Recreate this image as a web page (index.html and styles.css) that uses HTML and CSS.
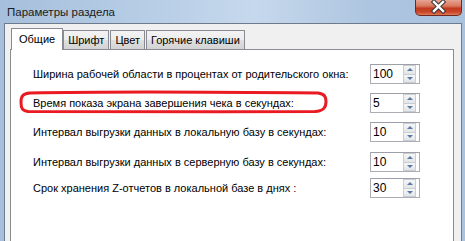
FILE: index.html
```html
<!DOCTYPE html>
<html>
<head>
<meta charset="utf-8">
<link rel="stylesheet" href="styles.css">
</head>
<body>
<div class="window">
  <div class="titlebar">
    <span class="title">Параметры раздела</span>
    <div class="close">
      <svg width="47" height="16" viewBox="0 0 47 16">
        <path d="M19 3 L28 12 M28 3 L19 12" stroke="#3a3a3a" stroke-width="4.5" stroke-linecap="square"/>
        <path d="M19 3 L28 12 M28 3 L19 12" stroke="#ffffff" stroke-width="2.4" stroke-linecap="square"/>
      </svg>
    </div>
  </div>
  <div class="client">
    <div class="tabs">
      <div class="tab active">Общие</div>
      <div class="tab">Шрифт</div>
      <div class="tab">Цвет</div>
      <div class="tab">Горячие клавиши</div>
    </div>
    <div class="panel">
      <div class="row">
        <span class="label">Ширина рабочей области в процентах от родительского окна:</span>
        <div class="spin"><span class="value">100</span><div class="buttons"><span class="btn up"></span><span class="btn down"></span></div></div>
      </div>
      <div class="row">
        <span class="label">Время показа экрана завершения чека в секундах:</span>
        <div class="spin"><span class="value">5</span><div class="buttons"><span class="btn up"></span><span class="btn down"></span></div></div>
      </div>
      <div class="row">
        <span class="label">Интервал выгрузки данных в локальную базу в секундах:</span>
        <div class="spin"><span class="value">10</span><div class="buttons"><span class="btn up"></span><span class="btn down"></span></div></div>
      </div>
      <div class="row">
        <span class="label">Интервал выгрузки данных в серверную базу в секундах:</span>
        <div class="spin"><span class="value">10</span><div class="buttons"><span class="btn up"></span><span class="btn down"></span></div></div>
      </div>
      <div class="row">
        <span class="label">Срок хранения Z-отчетов в локальной базе в днях :</span>
        <div class="spin"><span class="value">30</span><div class="buttons"><span class="btn up"></span><span class="btn down"></span></div></div>
      </div>
      <svg class="mark" width="312" height="25" viewBox="0 0 312 25">
        <path d="M12 3 C60 2 200 2 300 3 C307 4 308 7 308 12 C308 18 305 21 297 21.5 C200 22 80 22 10 21.5 C4 21 3 18 3 12 C3 6 5 3.5 12 3 Z" fill="none" stroke="#ea1a22" stroke-width="3"/>
      </svg>
    </div>
  </div>
</div>
</body>
</html>
```

FILE: styles.css
```css
html, body {
  margin: 0;
  padding: 0;
}
body {
  width: 465px;
  height: 241px;
  overflow: hidden;
  background: #97b2d0;
  font-family: "Liberation Sans", Arial, sans-serif;
  font-size: 11px;
  color: #000;
}
.window {
  display: flex;
  flex-direction: column;
  height: 241px;
  background: linear-gradient(to right, #a6bfdc 0%, #b9cfe7 35%, #c6d8ec 55%, #adc5e0 80%, #a9c2de 100%);
}
.titlebar {
  height: 23px;
  display: flex;
  align-items: flex-start;
}
.title {
  font-size: 11.5px;
  color: #1b1b1b;
  margin: 6px 0 0 7px;
}
.close {
  margin-left: auto;
  margin-right: 3px;
  width: 47px;
  height: 16px;
  box-sizing: border-box;
  border: 1px solid #6e2a20;
  border-top: none;
  border-radius: 0 0 5px 5px;
  background: linear-gradient(to bottom, #e6a493 0%, #d9785f 40%, #c23a1e 55%, #c9472a 80%, #e07a55 100%);
  overflow: hidden;
}
.close svg {
  display: block;
  margin: -1px 0 0 -1px;
}
.client {
  flex: 1;
  margin: 0 3px 0 4px;
  border: 1px solid #6d7b8c;
  border-bottom: none;
  background: #f0f0f0;
  padding: 4px 7px 0 5px;
  display: flex;
  flex-direction: column;
}
.tabs {
  display: flex;
  align-items: flex-end;
  padding-left: 1px;
  height: 21px;
  position: relative;
  z-index: 1;
}
.tab {
  height: 19px;
  box-sizing: border-box;
  padding: 3px 4px 0 4px;
  border: 1px solid #898c95;
  border-bottom: none;
  background: linear-gradient(to bottom, #f3f3f3 0%, #ececec 50%, #e0e0e0 51%, #d3d3d3 100%);
  margin-right: 1px;
  line-height: 13px;
}
.tab.active {
  height: 22px;
  margin-bottom: -1px;
  background: #fff;
  padding: 4px 7px 0 7px;
  margin-right: 0;
}
.panel {
  flex: 1;
  border: 1px solid #898c95;
  border-bottom: none;
  background: #fff;
  padding: 14px 0 0 22px;
  position: relative;
}
.row {
  display: grid;
  grid-template-columns: 337px 50px;
  align-items: center;
  height: 20px;
  margin-bottom: 9px;
}
.row:nth-child(3) {
  margin-bottom: 10px;
}
.row:nth-child(4) {
  margin-bottom: 6px;
}
.label {
  white-space: nowrap;
}
.spin {
  width: 50px;
  height: 20px;
  box-sizing: border-box;
  border: 1px solid #abadb3;
  border-top-color: #9da0a8;
  display: flex;
  background: #fff;
}
.value {
  flex: 1;
  padding: 2px 0 0 2px;
  font-size: 12px;
  line-height: 14px;
}
.buttons {
  width: 13px;
  margin-right: 3px;
  display: flex;
  flex-direction: column;
}
.btn {
  flex: 1;
  position: relative;
  box-sizing: border-box;
  border: 1px solid #c9cdd4;
  background: linear-gradient(to bottom, #f6f6f6, #e3e5e8);
}
.btn.up {
  border-bottom: none;
}
.btn::after {
  content: "";
  position: absolute;
  left: 3px;
  top: 2px;
  border-left: 3px solid transparent;
  border-right: 3px solid transparent;
}
.btn.up::after {
  border-bottom: 3px solid #5a78a8;
}
.btn.down::after {
  border-top: 3px solid #5a78a8;
}
.mark {
  position: absolute;
  left: 7px;
  top: 40px;
}
```
